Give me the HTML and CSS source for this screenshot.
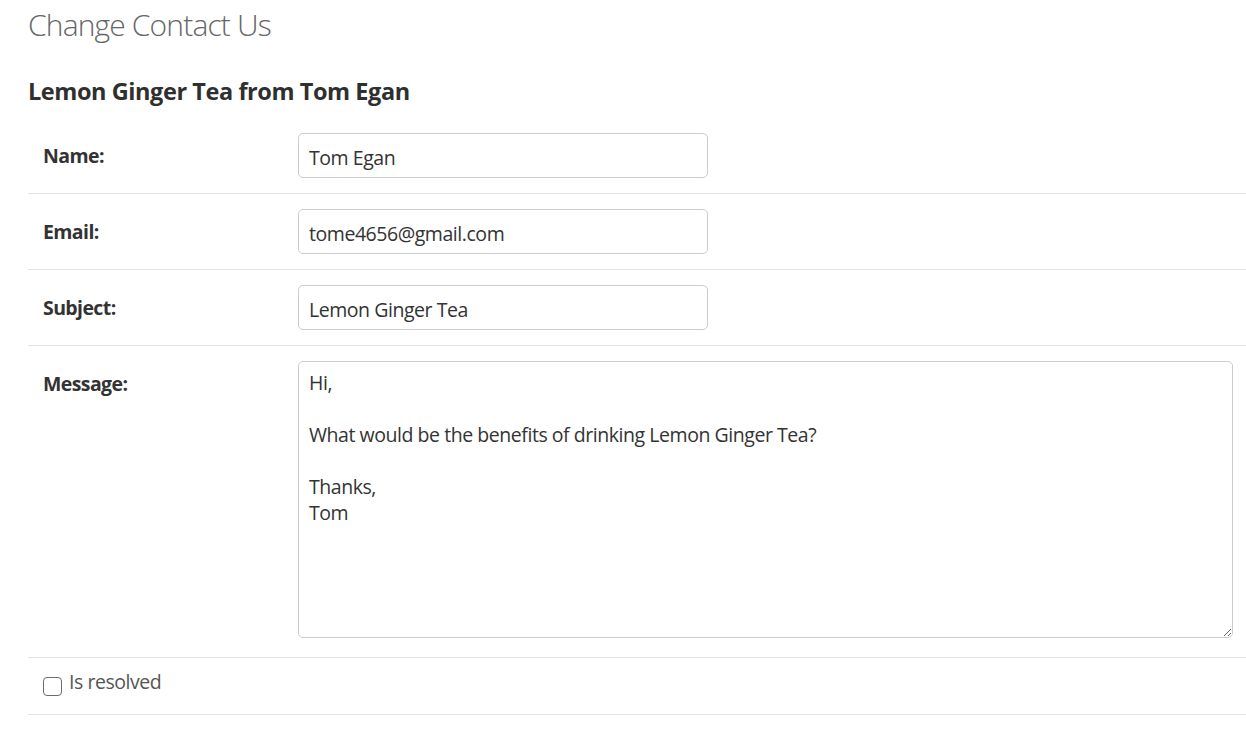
FILE: index.html
```html
<!DOCTYPE html>
<html lang="en">
<head>
<meta charset="utf-8">
<title>Change Contact Us</title>
<link rel="stylesheet" href="styles.css">
</head>
<body>
<main class="page">
  <h1 class="page-title">Change Contact Us</h1>
  <h2 class="subject-title">Lemon Ginger Tea from Tom Egan</h2>
  <form class="form">
    <div class="row">
      <label class="row-label" for="name">Name:</label>
      <div class="row-field"><input class="text-input" id="name" type="text" value="Tom Egan"></div>
    </div>
    <div class="row">
      <label class="row-label" for="email">Email:</label>
      <div class="row-field"><input class="text-input" id="email" type="text" value="tome4656@gmail.com"></div>
    </div>
    <div class="row">
      <label class="row-label" for="subject">Subject:</label>
      <div class="row-field"><input class="text-input" id="subject" type="text" value="Lemon Ginger Tea"></div>
    </div>
    <div class="row row-message">
      <label class="row-label" for="message">Message:</label>
      <div class="row-field"><textarea class="text-area" id="message">Hi,

What would be the benefits of drinking Lemon Ginger Tea?

Thanks,
Tom</textarea></div>
    </div>
    <div class="row row-check">
      <label class="check-label"><input class="check" type="checkbox"><span>Is resolved</span></label>
    </div>
  </form>
</main>
</body>
</html>
```

FILE: styles.css
```css
* { box-sizing: border-box; }
html, body { margin: 0; padding: 0; background: #fff; }
body {
  font-family: "Open Sans", "Noto Sans", sans-serif;
  color: #333;
}
.page {
  padding-left: 28px;
}
.page-title {
  margin: 0;
  padding-top: 5px;
  font-size: 30px;
  line-height: 40px;
  font-weight: 300;
  letter-spacing: -0.85px;
  color: #666;
}
.subject-title {
  margin: 0;
  padding-top: 31px;
  font-size: 23.5px;
  line-height: 30px;
  font-weight: 700;
  letter-spacing: -0.43px;
  color: #2f2f2f;
}
.form {
  margin-top: 12px;
}
.row {
  display: flex;
  align-items: flex-start;
  padding: 15px 13px 15px 0;
  border-bottom: 1px solid #e4e4e4;
}
.row-message { padding-bottom: 19px; }
.row-label {
  flex: 0 0 270px;
  padding-left: 15px;
  padding-top: 10px;
  font-size: 19.5px;
  line-height: 26px;
  font-weight: 700;
  letter-spacing: -0.6px;
  color: #333;
}
.row-field { flex: 1; }
.text-input,
.text-area {
  display: block;
  margin: 0;
  font-family: inherit;
  font-size: 19.5px;
  line-height: 26px;
  letter-spacing: -0.45px;
  color: #333;
  border: 1px solid #ccc;
  border-radius: 5px;
  background: #fff;
}
.text-input {
  width: 410px;
  height: 45px;
  padding: 10px 10px 7px 10px;
}
.text-area {
  width: 100%;
  height: 277px;
  padding: 8px 10px;
  resize: both;
}
.row-check {
  padding: 11px 0 18px 15px;
}
.check-label {
  display: flex;
  align-items: flex-start;
  gap: 7px;
  font-size: 19.5px;
  line-height: 26px;
  letter-spacing: -0.45px;
  color: #555;
}
.check {
  appearance: none;
  -webkit-appearance: none;
  flex: 0 0 auto;
  margin: 8px 0 0 0;
  width: 19px;
  height: 19px;
  border: 1.5px solid #6b6b6b;
  border-radius: 4px;
  background: #fff;
}
```
